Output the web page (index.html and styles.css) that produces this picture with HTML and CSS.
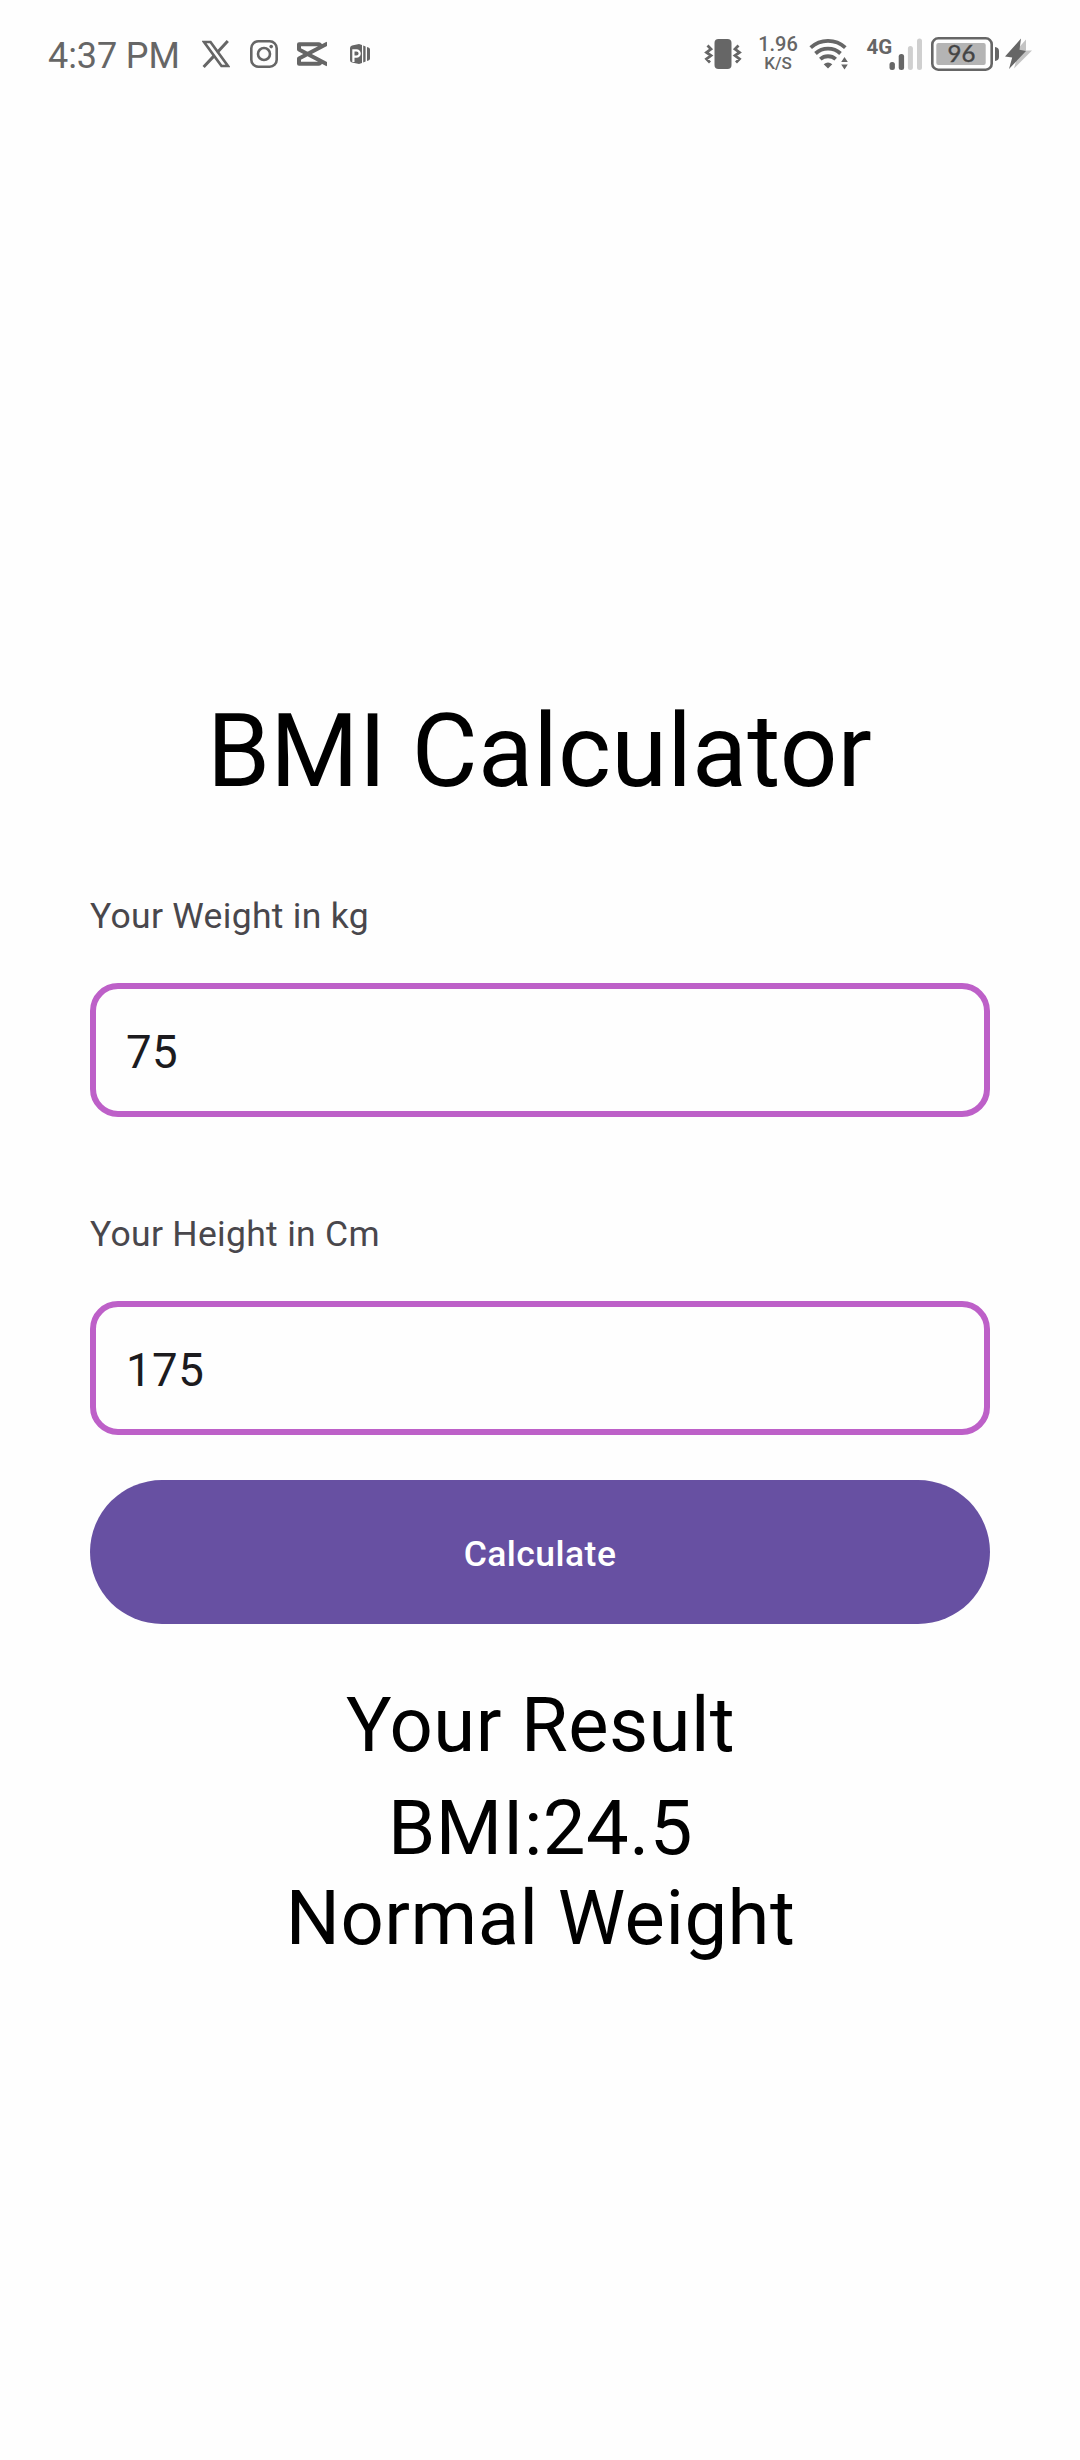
FILE: index.html
```
<!DOCTYPE html>
<html lang="en">
<head>
<meta charset="utf-8">
<title>BMI Calculator</title>
<link rel="stylesheet" href="styles.css">
</head>
<body>
<header class="status">
  <div class="status-group">
    <span class="clock">4:37 PM</span>
    <svg class="icon" width="28" height="40" viewBox="202 34 28 40">
      <path d="M204 42h6.500l17.500 24h-6.500z" fill="none" stroke="currentColor" stroke-width="2.700"/>
      <path d="M227.800 41l-10.600 11.600M214.300 55.600L203.600 67" fill="none" stroke="currentColor" stroke-width="3"/>
    </svg>
    <svg class="icon instagram" width="28" height="40" viewBox="250 34 28 40">
      <rect x="251.300" y="41.300" width="25.400" height="25.400" rx="7" fill="none" stroke="currentColor" stroke-width="2.600"/>
      <circle cx="264" cy="54" r="6" fill="none" stroke="currentColor" stroke-width="2.600"/>
      <circle cx="271.200" cy="46.600" r="1.800" fill="currentColor"/>
    </svg>
    <svg class="icon capcut" width="30" height="40" viewBox="297 34 30 40">
      <path d="M327.500 43.500L299 58.500V63.800H318.500Q320.200 63.800 320.200 62V60.300M327.500 64.500L299 49.500V44.200H318.500Q320.200 44.200 320.200 46V47.700" fill="none" stroke="currentColor" stroke-width="4" stroke-linejoin="round"/>
    </svg>
    <svg class="icon projector" width="21" height="40" viewBox="350 34 21 40">
      <path d="M352 45.500l7-1.500 3 1v18l-3 1-7-1.500q-2-.4-2-2.500v-12q0-2 2-2.500z" fill="currentColor"/>
      <path d="M353.400 62V50.300h3.100a3.200 3.200 0 0 1 0 6.400h-3" fill="none" stroke="#fff" stroke-width="2.200"/>
      <path d="M363.200 45.500l2.400 1v15l-2.400 1zM367 47l2 .8q1 .5 1 1.700v9q0 1.200-1 1.700l-2 .8z" fill="currentColor"/>
    </svg>
  </div>
  <div class="status-group">
    <svg class="icon" width="38" height="40" viewBox="704 34 38 40">
      <rect x="714.500" y="39" width="17" height="30" rx="4" fill="currentColor"/>
      <path d="M707.500 45.500l3.500 3.500-4.500 3.500 4.500 3-4.500 3.500 3.500 3.500M738.500 45.500l-3.500 3.500 4.500 3.500-4.500 3 4.500 3.500-3.500 3.500" fill="none" stroke="currentColor" stroke-width="2.800"/>
    </svg>
    <div class="speed"><span class="rate">1.96</span><span class="unit">K/S</span></div>
    <svg class="icon wifi" width="39" height="40" viewBox="809 34 39 40">
      <g fill="none" stroke="currentColor" stroke-width="3.800">
        <path d="M810.700 47.600a25.500 25.500 0 0 1 34.600 0"/>
        <path d="M815.500 53.500a18.300 18.300 0 0 1 25 0"/>
        <path d="M820.300 59.200a11.500 11.500 0 0 1 15.400 0"/>
      </g>
      <path d="M828 68.500l-4.300-4.200q4.300-3.600 8.600 0zM844.500 57l3.300 5h-6.600zM844.500 69.500l3.300-5h-6.600z" fill="currentColor"/>
    </svg>
    <svg class="icon signal" width="56" height="40" viewBox="866 34 56 40">
      <text class="network" x="866.500" y="53.500">4G</text>
      <rect x="889.500" y="62" width="5.400" height="8" rx="2.500" fill="currentColor"/>
      <rect x="898.700" y="54" width="5.400" height="16" rx="2.500" fill="currentColor"/>
      <rect x="907.900" y="46" width="5" height="24" rx="2.500" fill="#cfcfcf"/>
      <rect x="917" y="38.500" width="5" height="31.500" rx="2.500" fill="#cfcfcf"/>
    </svg>
    <svg class="icon battery" width="68" height="40" viewBox="931 34 68 40">
      <rect x="932.300" y="38.300" width="59.400" height="31.400" rx="6" fill="none" stroke="currentColor" stroke-width="2.600"/>
      <rect x="936.300" y="43" width="49.400" height="22" rx="2" fill="#b4b4b4"/>
      <path d="M995 47q4 .5 4 4v6q0 3.500-4 4z" fill="currentColor"/>
      <text class="level" x="961.500" y="62">96</text>
    </svg>
    <svg class="icon bolt" width="28" height="40" viewBox="1005 34 28 40">
      <path d="M1026 39.500l-15 17 6 1-3 11 18-18h-6z" fill="#c4c4c4"/>
      <path d="M1021 38.500l-16 18 7.200 1-3.200 11.500 17-18-6.500-1.200z" fill="currentColor"/>
    </svg>
  </div>
</header>
<main class="calculator">
  <h1 class="title">BMI Calculator</h1>
  <div class="field">
    <label class="label" for="weight">Your Weight in kg</label>
    <input class="input" id="weight" type="text" value="75">
  </div>
  <div class="field">
    <label class="label" for="height">Your Height in Cm</label>
    <input class="input" id="height" type="text" value="175">
  </div>
  <button class="calculate" type="button">Calculate</button>
  <h2 class="result-title">Your Result</h2>
  <p class="result">BMI:24.5<br>Normal Weight</p>
</main>
</body>
</html>
```
FILE: styles.css
```
* {
  box-sizing: border-box;
}

body {
  margin: 0;
  min-height: 2460px;
  background: #fefefe;
  color: #000;
  font-family: Roboto, sans-serif;
}

.status {
  display: flex;
  justify-content: space-between;
  height: 108px;
  padding: 34px 47px 0 48px;
  color: #666;
}

.status-group {
  display: flex;
  align-items: flex-start;
}

.icon {
  display: block;
  flex: none;
}

.instagram {
  margin-left: 20px;
}

.capcut {
  margin-left: 19px;
}

.projector {
  margin-left: 23px;
}

.clock {
  width: 154px;
  font-size: 36px;
  line-height: 44px;
  letter-spacing: -0.1px;
  white-space: nowrap;
}

.speed {
  display: flex;
  flex-direction: column;
  align-items: center;
  width: 38px;
  margin-left: 17px;
  font-weight: 500;
}

.rate {
  font-size: 20px;
  line-height: 20px;
}

.unit {
  font-size: 17px;
  line-height: 18px;
}

.wifi {
  margin-left: 12px;
}

.signal {
  margin-left: 18px;
}

.battery {
  margin-left: 9px;
}

.bolt {
  margin-left: 6px;
}

.network {
  font-size: 20.5px;
  font-weight: 700;
  fill: #666;
}

.level {
  font: 24px Lato, sans-serif;
  fill: #444;
  stroke: #444;
  stroke-width: 0.4px;
  text-anchor: middle;
}

.calculator {
  display: flex;
  flex-direction: column;
  padding: 584px 90px 0;
}

.title {
  margin: 0 0 79px;
  padding-right: 1px;
  font-size: 101.25px;
  font-weight: 400;
  line-height: 120px;
  letter-spacing: 0.2px;
  text-align: center;
}

.field {
  display: flex;
  flex-direction: column;
  gap: 42px;
  margin-bottom: 92px;
}

.field + .calculate {
  margin-top: -47px;
}

.label {
  color: #49474c;
  font-size: 35.5px;
  line-height: 50px;
  letter-spacing: 0.3px;
}

.input {
  width: 100%;
  height: 134px;
  padding: 5px 30px 0;
  border: 6px solid #bd60c8;
  border-radius: 28px;
  background: transparent;
  color: #1c1b1e;
  font: 45.6px Roboto, sans-serif;
  letter-spacing: 0.5px;
  outline: none;
}

.calculate {
  height: 144px;
  margin-bottom: 56px;
  padding: 4px 0 0;
  border: 0;
  border-radius: 72px;
  background: #6750a2;
  color: #fff;
  font: 500 35.5px Roboto, sans-serif;
  letter-spacing: 0.45px;
}

.result-title,
.result {
  margin: 0;
  padding-left: 1px;
  font-size: 76px;
  font-weight: 400;
  line-height: 90px;
  letter-spacing: 0.5px;
  text-align: center;
}

.result-title {
  margin-bottom: 13px;
  letter-spacing: 0.4px;
}
```
